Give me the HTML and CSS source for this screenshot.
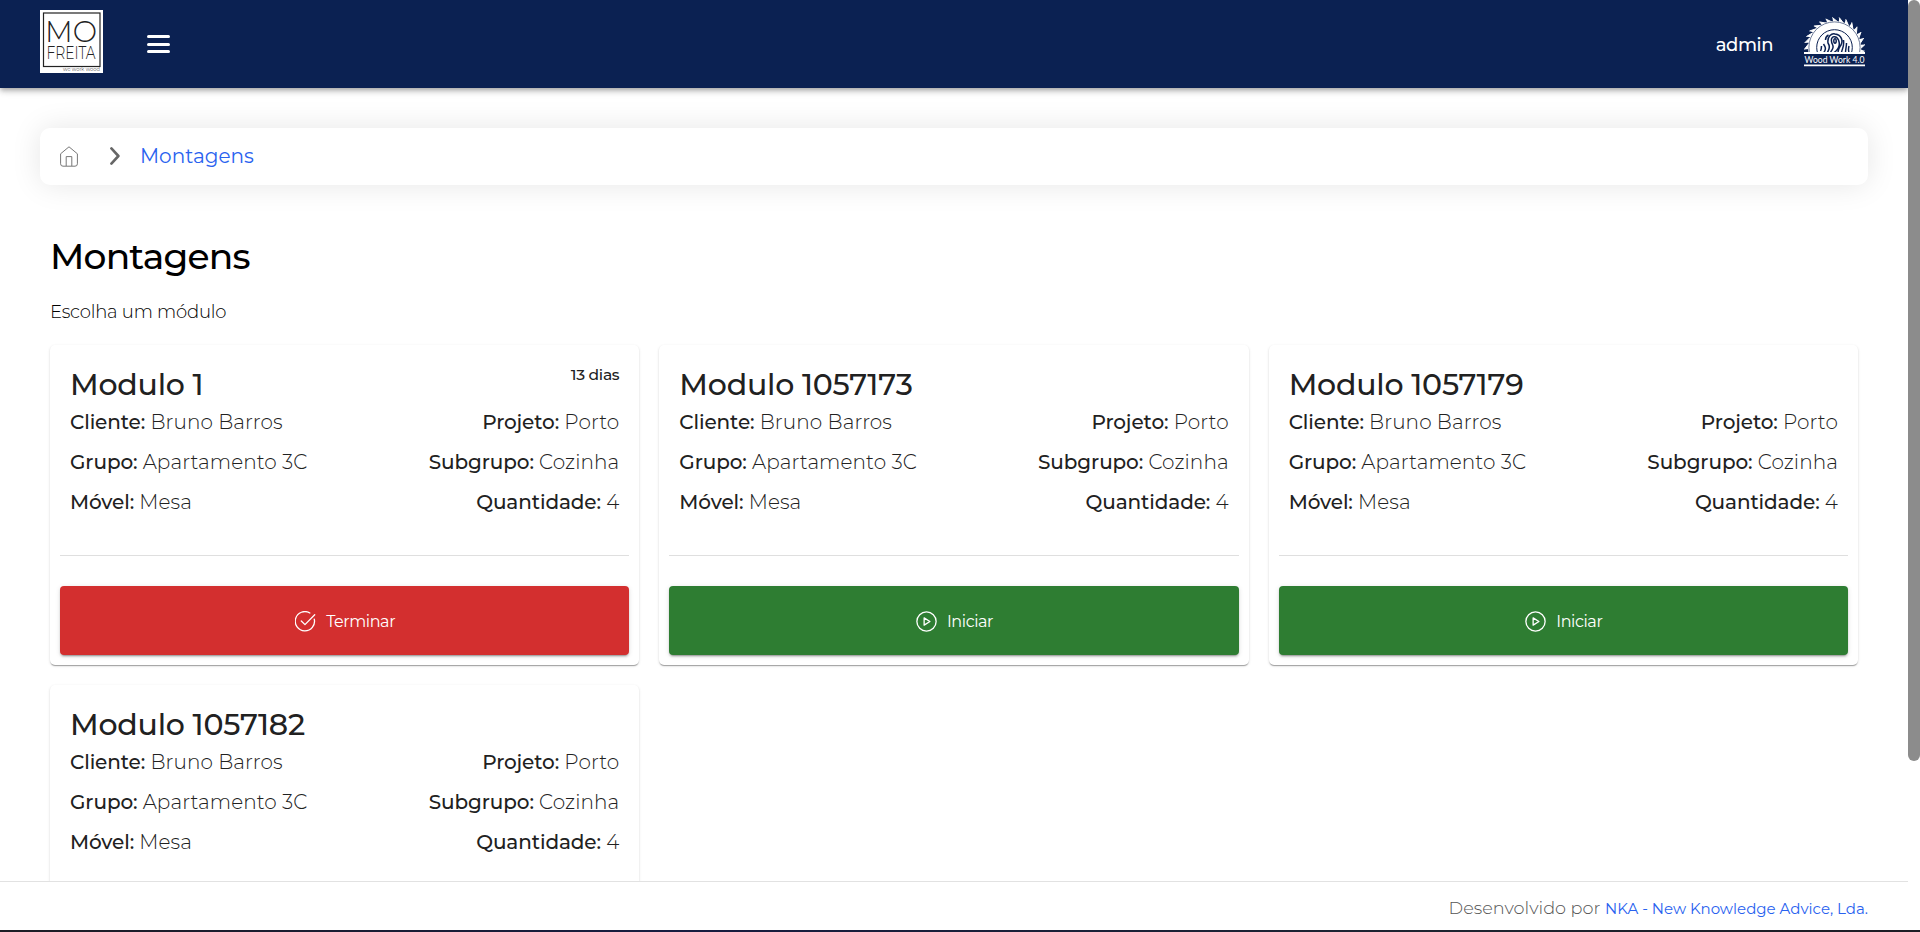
FILE: index.html
```
<!DOCTYPE html>
<html lang="pt">
<head>
<meta charset="utf-8">
<title>Montagens</title>
<link rel="stylesheet" href="styles.css">
</head>
<body>
<svg class="sprite" aria-hidden="true">
  <symbol id="i-check" viewBox="0 0 24 24"><path d="M22 9.200A11 11 0 1 1 17 2.300M22.500 4.200 11.400 15.600 7.200 11.400" /></symbol>
  <symbol id="i-play" viewBox="0 0 24 24"><circle cx="12" cy="12" r="11"/><path d="M9.3 7.8v8.4l6.6-4.2z"/></symbol>
</svg>
<div class="page">
  <header class="topbar">
    <svg class="brand" viewBox="0 0 63 63">
      <rect width="63" height="63" fill="#fff"/>
      <rect x="3.5" y="3" width="56.5" height="53.5" fill="none" stroke="#222" stroke-width="1.2"/>
      <text x="5" y="32" font-size="31" textLength="52" lengthAdjust="spacingAndGlyphs">MO</text>
      <text x="6.500" y="49" font-size="18" textLength="49" lengthAdjust="spacingAndGlyphs">FREITA</text>
      <text x="23" y="61.2" font-size="5" textLength="37" lengthAdjust="spacingAndGlyphs">we work wood</text>
    </svg>
    <button class="menu" aria-label="Menu"><span></span><span></span><span></span></button>
    <span class="user">admin</span>
    <svg class="saw" viewBox="0 0 61 50">
      <clipPath id="above"><path d="M0 0h61v35H0z"/></clipPath>
      <g clip-path="url(#above)" fill="none">
        <path d="M0.7 25.9L5.6 20.9L6.1 25.6M2.400 19.600L8.300 16L7.700 20.400M5.500 14L12 11.800L10.500 16M9.900 9L16.700 8.400L14.100 12M15.400 4.900L22.100 6.100L18.600 8.900M21.700 2L27.900 4.900L23.700 6.700M28.400.5L33.700 4.800L29.200 5.500M35.200.5L39.300 5.900L34.800 5.500M41.800 2.300L44.500 8.500L40.300 6.900M47.800 5.400L48.900 12L45.300 9.400M53 9.700L52.400 16.400L49.500 13M57 15L54.800 21.300L52.700 17.300M59.700 21L56 26.700L55 22.200M61 27.500L56.200 32L56 27.700M60.500 34L55 36L56 32M.2 32.500L4.500 27L5 32" fill="#fff" stroke="#fff" stroke-width="1"/>
        <circle cx="30.500" cy="30.500" r="26.500" fill="#fff"/>
        <circle cx="30.500" cy="30.500" r="25.600" stroke="#0b2152" stroke-width=".6"/>
        <circle cx="30.500" cy="30.500" r="17.800" stroke="#0b2152" stroke-width="1"/>
        <g stroke="#0b2152" stroke-width="1.500">
          <ellipse cx="31" cy="24" rx="1.200" ry="2.200"/>
          <path d="M29.500 36c6-4 7-8 5-13-2-5-8-4-7 1 0 4 3 4 1 8-1 2-2 3-2 4M23 36c3-4 3-7 1-10-1-7 4-10 7-9 7 1 8 7 6 11-2 3-3 4-3 8M19.500 36c3-4 2-6 0-9M16.500 34c1-2 1-3 1-5M21.500 23c0-2 1-4 3-5M37.500 36c0-4 3-5 2-13M41.500 36c0-4 1-6 1-10M45 35c-1-2-.5-4 0-6"/>
        </g>
      </g>
      <path d="M0 35h61v2H0zM0 47.500h61v1.800H0z" fill="#fff"/>
      <text x="0.500" y="45.600" font-size="9" textLength="60" lengthAdjust="spacingAndGlyphs">Wood Work 4.0</text>
    </svg>
  </header>

  <main class="content">
    <nav class="crumbs">
      <svg class="home" viewBox="0 0 18 21"><path d="M.6 7.800 9 .8l8.400 7v10q0 2.400-2.400 2.400H3Q.6 20.200.6 17.800zM6.200 20V10.600h5.600V20"/></svg>
      <svg class="chevron" viewBox="0 0 10 18"><path d="M1.400 1.400 8.400 9l-7 7.600"/></svg>
      <a class="crumb">Montagens</a>
    </nav>

    <section class="modules">
      <h1 class="title">Montagens</h1>
      <p class="subtitle">Escolha um módulo</p>
      <div class="grid">
        <article class="card">
          <div class="info">
            <div class="head"><h2>Modulo 1</h2><span class="days">13 dias</span></div>
            <div class="row"><span><b>Cliente:</b> Bruno Barros</span><span><b>Projeto:</b> Porto</span></div>
            <div class="row"><span><b>Grupo:</b> Apartamento 3C</span><span><b>Subgrupo:</b> Cozinha</span></div>
            <div class="row"><span><b>Móvel:</b> Mesa</span><span><b>Quantidade:</b> 4</span></div>
          </div>
          <button class="action stop"><svg><use href="#i-check"/></svg>Terminar</button>
        </article>
        <article class="card">
          <div class="info">
            <div class="head"><h2>Modulo 1057173</h2></div>
            <div class="row"><span><b>Cliente:</b> Bruno Barros</span><span><b>Projeto:</b> Porto</span></div>
            <div class="row"><span><b>Grupo:</b> Apartamento 3C</span><span><b>Subgrupo:</b> Cozinha</span></div>
            <div class="row"><span><b>Móvel:</b> Mesa</span><span><b>Quantidade:</b> 4</span></div>
          </div>
          <button class="action start"><svg><use href="#i-play"/></svg>Iniciar</button>
        </article>
        <article class="card">
          <div class="info">
            <div class="head"><h2>Modulo 1057179</h2></div>
            <div class="row"><span><b>Cliente:</b> Bruno Barros</span><span><b>Projeto:</b> Porto</span></div>
            <div class="row"><span><b>Grupo:</b> Apartamento 3C</span><span><b>Subgrupo:</b> Cozinha</span></div>
            <div class="row"><span><b>Móvel:</b> Mesa</span><span><b>Quantidade:</b> 4</span></div>
          </div>
          <button class="action start"><svg><use href="#i-play"/></svg>Iniciar</button>
        </article>
        <article class="card">
          <div class="info">
            <div class="head"><h2>Modulo 1057182</h2></div>
            <div class="row"><span><b>Cliente:</b> Bruno Barros</span><span><b>Projeto:</b> Porto</span></div>
            <div class="row"><span><b>Grupo:</b> Apartamento 3C</span><span><b>Subgrupo:</b> Cozinha</span></div>
            <div class="row"><span><b>Móvel:</b> Mesa</span><span><b>Quantidade:</b> 4</span></div>
          </div>
        </article>
      </div>
    </section>
  </main>

  <footer class="footer"><span>Desenvolvido por <a>NKA - New Knowledge Advice, Lda.</a></span></footer>
</div>
<div class="scrollbar"></div>
<div class="edge"></div>
</body>
</html>
```
FILE: styles.css
```
* { box-sizing: border-box; }
html, body { height: 100%; overflow: hidden; }
body {
  margin: 0;
  display: grid;
  grid-template: minmax(0, 1fr) 2px / minmax(0, 1fr) 12px;
  background: #fff;
  color: #212121;
  font-family: Montserrat, Inter, sans-serif;
  font-weight: 300;
}
button { border: 0; padding: 0; font: inherit; }
.sprite { position: absolute; width: 0; height: 0; }
.page { display: flex; flex-direction: column; min-height: 0; overflow: hidden; }

.topbar {
  flex: none;
  height: 88px;
  padding: 0 43px 0 40px;
  display: flex;
  align-items: center;
  background: #0b2152;
  box-shadow: 0 2px 4px -1px rgba(0,0,0,.2), 0 4px 5px rgba(0,0,0,.14), 0 1px 10px rgba(0,0,0,.12);
  z-index: 1;
}
.brand { width: 63px; height: 63px; margin-bottom: 5px; fill: #222; font-weight: 300; overflow: visible; }
.menu { display: flex; flex-direction: column; gap: 4.500px; width: 23px; margin-left: 43.500px; background: none; }
.menu span { height: 3px; border-radius: 2px; background: #fff; }
.user { margin: 2px 31px 0 auto; color: #fff; font-size: 18px; font-weight: 500; letter-spacing: -.4px; }
.saw { width: 61px; height: 50px; margin-bottom: 4px; fill: #fff; font-family: Lato, sans-serif; font-weight: 400; overflow: visible; }

.content { flex: 1; min-height: 0; overflow: hidden; padding: 40px 40px 0; }
.crumbs {
  height: 57px;
  padding-left: 20px;
  display: flex;
  align-items: center;
  border-radius: 10px;
  background: #fff;
  box-shadow: 0 0 30px rgba(0,0,0,.1);
}
.home { width: 18px; height: 21px; fill: none; stroke: #777; stroke-width: 1; }
.chevron { width: 10px; height: 18px; margin: 0 20px 1px 32px; fill: none; stroke: #666; stroke-width: 2.600; stroke-linecap: round; stroke-linejoin: round; }
.crumb { margin-bottom: 2px; font-size: 20px; font-weight: 400; color: #2962ef; }

.modules { padding: 47px 10px 0; }
.title { margin: 0; font-size: 36px; line-height: 48px; font-weight: 500; letter-spacing: -.8px; color: #000; }
.subtitle { margin: 19px 0 20px; font-size: 18px; line-height: 26px; letter-spacing: -.2px; color: #000; }
.grid { display: grid; grid-template-columns: repeat(3, 1fr); gap: 20px; }
.card {
  height: 320px;
  padding: 8px 10px 10px;
  display: flex;
  flex-direction: column;
  border-radius: 5px;
  background: #fff;
  box-shadow: 0 2px 1px -1px rgba(0,0,0,.2), 0 1px 1px rgba(0,0,0,.14), 0 1px 3px rgba(0,0,0,.12);
}
.info { height: 203px; padding: 12px 10px 0; border-bottom: 1px solid #dfdfdf; }
.head { display: flex; justify-content: space-between; height: 37px; }
.head h2 { margin: 0; font-size: 30px; line-height: 40px; font-weight: 500; letter-spacing: -.2px; }
.days { font-size: 15.500px; line-height: 20px; font-weight: 500; letter-spacing: -.3px; }
.row { display: flex; justify-content: space-between; height: 40px; font-size: 20px; line-height: 40px; letter-spacing: .08px; }
.row b { font-weight: 500; letter-spacing: -.1px; }
.action {
  flex: none;
  height: 69px;
  margin-top: auto;
  padding: 1px 0 0 1px;
  display: flex;
  align-items: center;
  justify-content: center;
  gap: 10px;
  border-radius: 4px;
  color: #fff;
  font-size: 16px;
  font-weight: 400;
  letter-spacing: -.4px;
  box-shadow: 0 3px 1px -2px rgba(0,0,0,.2), 0 2px 2px rgba(0,0,0,.14), 0 1px 5px rgba(0,0,0,.12);
}
.action svg { width: 21px; height: 21px; fill: none; stroke: #fff; stroke-width: 1.500; stroke-linejoin: round; stroke-linecap: round; }
.stop { background: #d32f2f; }
.start { background: #2e7d32; }

.footer {
  flex: none;
  height: 49px;
  padding: 0 40px 0 0;
  border-top: 1px solid #e2e2e2;
  text-align: right;
  font-size: 17.700px;
  line-height: 51px;
  color: #555;
}
.footer a { font-size: 15px; font-weight: 400; color: #2962ef; }
.scrollbar { height: 761px; border-radius: 6px; background: #8c8c8c; }
.edge { grid-column: 1 / -1; background: linear-gradient(90deg, #1c1c24, #161c40 35%, #1c2430 75%, #1c1c24); }
```
